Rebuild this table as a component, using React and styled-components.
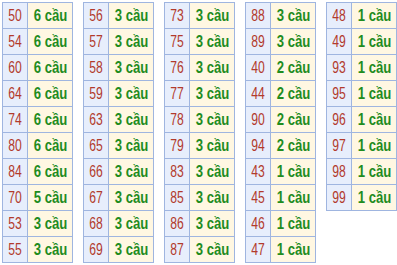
import React from 'react';
import styled, { createGlobalStyle } from 'styled-components';

const columns = [
  [[50, 6], [54, 6], [60, 6], [64, 6], [74, 6], [80, 6], [84, 6], [70, 5], [53, 3], [55, 3]],
  [[56, 3], [57, 3], [58, 3], [59, 3], [63, 3], [65, 3], [66, 3], [67, 3], [68, 3], [69, 3]],
  [[73, 3], [75, 3], [76, 3], [77, 3], [78, 3], [79, 3], [83, 3], [85, 3], [86, 3], [87, 3]],
  [[88, 3], [89, 3], [40, 2], [44, 2], [90, 2], [94, 2], [43, 1], [45, 1], [46, 1], [47, 1]],
  [[48, 1], [49, 1], [93, 1], [95, 1], [96, 1], [97, 1], [98, 1], [99, 1]],
];

const App = () => {
  return (
    <>
      <GlobalStyle />
      <StyledWrap>
        {columns.map((rows, i) => (
          <StyledTable key={i}>
            <tbody>
              {rows.map(([num, count]) => (
                <tr key={num}>
                  <StyledNum><StyledText $squeeze={0.76}>{num}</StyledText></StyledNum>
                  <StyledCount><StyledText $squeeze={0.82}>{count} cầu</StyledText></StyledCount>
                </tr>
              ))}
            </tbody>
          </StyledTable>
        ))}
      </StyledWrap>
    </>
  );
};

const GlobalStyle = createGlobalStyle`
  body {
    margin: 0;
    background: #ffffff;
    font-family: "Liberation Sans", Arial, sans-serif;
  }
`;

const StyledWrap = styled.div`
  display: flex;
  align-items: flex-start;
  gap: 10px;
  padding: 2px 0 0 2px;
`;

const StyledTable = styled.table`
  width: 71px;
  border-collapse: separate;
  border-spacing: 0;
  border-top: 1px solid #9fb5e0;
  border-left: 1px solid #9fb5e0;
  table-layout: fixed;
`;

const Cell = styled.td`
  box-sizing: border-box;
  height: 26px;
  padding: 0;
  text-align: center;
  vertical-align: middle;
  font-size: 16px;
  line-height: 18px;
  white-space: nowrap;
  border-right: 1px solid #9fb5e0;
  border-bottom: 1px solid #9fb5e0;
`;

/* the reference uses a condensed face; squeeze Liberation Sans to match */
const StyledText = styled.span`
  display: inline-block;
  padding-top: 1px;
  transform: scaleX(${(p) => p.$squeeze});
`;

const StyledNum = styled(Cell)`
  width: 25px;
  background: #e7eefc;
  color: #b23a2c;
`;

const StyledCount = styled(Cell)`
  width: 45px;
  background: #fff7e2;
  color: #1f8c1f;
  font-weight: bold;
`;

export default App;
